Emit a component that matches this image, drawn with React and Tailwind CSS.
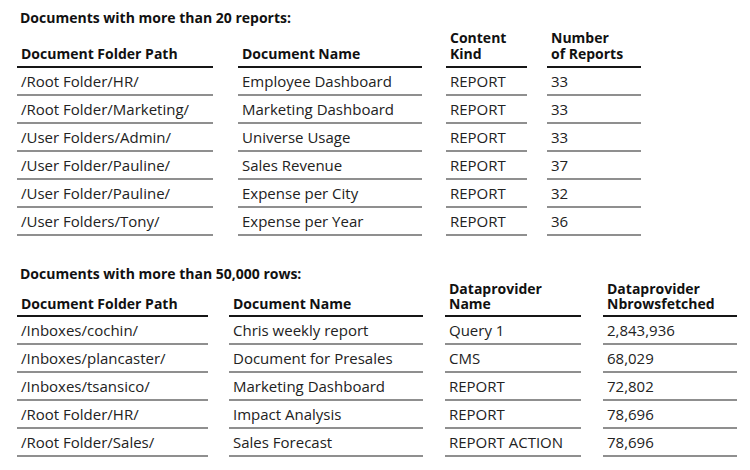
import React from "react";

const reports = [
  ["/Root Folder/HR/", "Employee Dashboard", "REPORT", "33"],
  ["/Root Folder/Marketing/", "Marketing Dashboard", "REPORT", "33"],
  ["/User Folders/Admin/", "Universe Usage", "REPORT", "33"],
  ["/User Folder/Pauline/", "Sales Revenue", "REPORT", "37"],
  ["/User Folder/Pauline/", "Expense per City", "REPORT", "32"],
  ["/User Folders/Tony/", "Expense per Year", "REPORT", "36"],
];

const bigDocs = [
  ["/Inboxes/cochin/", "Chris weekly report", "Query 1", "2,843,936"],
  ["/Inboxes/plancaster/", "Document for Presales", "CMS", "68,029"],
  ["/Inboxes/tsansico/", "Marketing Dashboard", "REPORT", "72,802"],
  ["/Root Folder/HR/", "Impact Analysis", "REPORT", "78,696"],
  ["/Root Folder/Sales/", "Sales Forecast", "REPORT ACTION", "78,696"],
];

// column widths + the gap before each column
const reportCols = ["w-[196px]", "ml-[25px] w-[184px]", "ml-[24px] w-[81px]", "ml-[20px] w-[94px]"];
const bigCols = ["w-[191px]", "ml-[21px] w-[194px]", "ml-[22px] w-[136px]", "ml-[22px] w-[134px]"];

function DataTable({ cols, headers, rows, headLeading }) {
  return (
    <div>
      <div className="flex">
        {headers.map((h, i) => (
          <div
            key={"h" + i}
            className={`${cols[i]} flex shrink-0 items-end border-b-2 border-[#161616] pb-[4px] pl-[4px] text-[14px] font-bold text-[#111] ${headLeading}`}
          >
            <p>
              {h[0]}
              {h[1] && <br />}
              {h[1]}
            </p>
          </div>
        ))}
      </div>
      {rows.map((r, ri) => (
        <div key={ri} className="flex">
          {r.map((cell, ci) => (
            <div
              key={ci}
              className={`${cols[ci]} flex h-[28px] shrink-0 items-center border-b-2 border-[#8f8f8f] pl-[4px] text-[15px] text-[#222]`}
            >
              {cell}
            </div>
          ))}
        </div>
      ))}
    </div>
  );
}

export default function App() {
  return (
    <div
      className="h-[470px] w-[750px] bg-white px-[17px] pt-[11px]"
      style={{ fontFamily: '"Open Sans", "DejaVu Sans", sans-serif' }}
    >
      <h2 className="pl-[3px] text-[14px] font-bold leading-[14px] text-[#111]">
        Documents with more than 20 reports:
      </h2>
      <div className="mt-[5px]">
        <DataTable
          cols={reportCols}
          headLeading="leading-[16px]"
          headers={[
            ["Document Folder Path"],
            ["Document Name"],
            ["Content", "Kind"],
            ["Number", "of Reports"],
          ]}
          rows={reports}
        />
      </div>

      <h2 className="mt-[31px] pl-[3px] text-[14px] font-bold leading-[14px] text-[#111]">
        Documents with more than 50,000 rows:
      </h2>
      <DataTable
        cols={bigCols}
        headLeading="leading-[15px]"
        headers={[
          ["Document Folder Path"],
          ["Document Name"],
          ["Dataprovider", "Name"],
          ["Dataprovider", "Nbrowsfetched"],
        ]}
        rows={bigDocs}
      />
    </div>
  );
}
